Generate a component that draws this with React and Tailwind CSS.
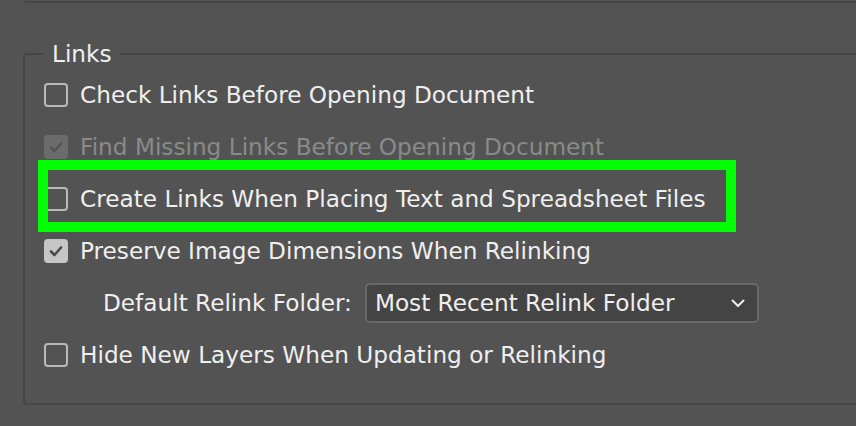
import React from 'react';

const Check = ({ color }) => (
  <svg width="16" height="16" viewBox="0 0 16 16" fill="none">
    <path d="M3 8.5 L6.5 12 L13 4.5" stroke={color} strokeWidth="2.6" strokeLinecap="round" strokeLinejoin="round" />
  </svg>
);

const Box = ({ checked, disabled }) => {
  if (checked) {
    return (
      <div className={"w-[24px] h-[24px] rounded-[4px] flex items-center justify-center shrink-0 " + (disabled ? "bg-[#6b6b6b]" : "bg-[#c6c6c6]")}>
        <Check color={disabled ? "#555555" : "#4a4a4a"} />
      </div>
    );
  }
  return <div className="w-[24px] h-[24px] rounded-[4px] border-2 border-[#b9b9b9] shrink-0" />;
};

const Row = ({ label, checked, disabled, children }) => (
  <div className="relative h-[52px] flex items-center gap-[12px]">
    <Box checked={checked} disabled={disabled} />
    <span className={disabled ? "text-[#8a8a8a]" : "text-[#efefef]"}>{label}</span>
    {children}
  </div>
);

export default function App() {
  return (
    <div className="w-[856px] h-[426px] overflow-hidden bg-[#535353] text-[23.2px] leading-none" style={{ fontFamily: '"DejaVu Sans", "Open Sans", sans-serif' }}>
      <div className="ml-[23px] w-[900px] h-[3px] border-l-2 border-b-2 border-[#474747] rounded-bl-[4px]" />
      <fieldset className="mt-[37px] ml-[23px] w-[900px] h-[365px] border-2 border-[#474747] rounded-[4px] pl-[19px] pt-[1px]">
        <legend className="px-[8px] text-[#efefef] leading-[28px]">Links</legend>
        <Row label="Check Links Before Opening Document" />
        <Row label="Find Missing Links Before Opening Document" checked disabled />
        <Row label="Create Links When Placing Text and Spreadsheet Files">
          <div className="absolute left-[-6px] top-[-13px] w-[698px] h-[72px] border-[10px] border-[#00ff00]" />
        </Row>
        <Row label="Preserve Image Dimensions When Relinking" checked />
        <div className="h-[52px] flex items-center pl-[59px] gap-[13px]">
          <span className="text-[#efefef]">Default Relink Folder:</span>
          <div className="w-[394px] h-[40px] rounded-[5px] border-2 border-[#696969] bg-[#444444] flex items-center justify-between pl-[8px] pr-[12px]">
            <span className="text-[#efefef]">Most Recent Relink Folder</span>
            <svg width="14" height="9" viewBox="0 0 14 9" fill="none">
              <path d="M1.5 1.5 L7 7 L12.5 1.5" stroke="#efefef" strokeWidth="2" strokeLinecap="round" strokeLinejoin="round" />
            </svg>
          </div>
        </div>
        <Row label="Hide New Layers When Updating or Relinking" />
      </fieldset>
    </div>
  );
}
